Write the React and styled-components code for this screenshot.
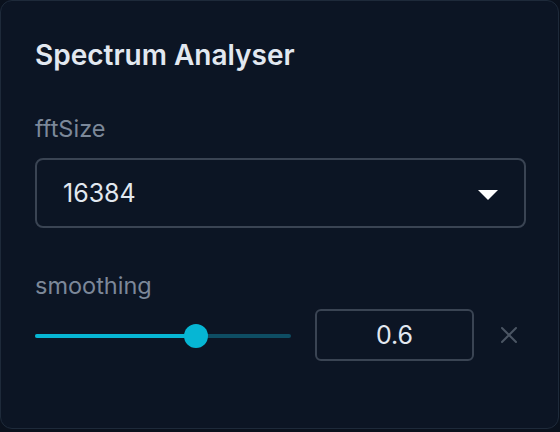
import React, { useState } from "react";
import styled, { createGlobalStyle } from "styled-components";

const GlobalStyle = createGlobalStyle`
  html, body {
    margin: 0;
    padding: 0;
    background: #0a111d;
  }
  body {
    font-family: Inter, "Noto Sans", sans-serif;
  }
`;

const Panel = styled.div`
  box-sizing: border-box;
  width: 559px;
  height: 429px;
  background: #0c1524;
  border: 1px solid #1e2a3a;
  border-radius: 12px;
  padding: 38px 34px 0 34px;
  display: flex;
  flex-direction: column;
`;

const Title = styled.h2`
  margin: 0;
  font-size: 28px;
  font-weight: 600;
  color: #e2e8f0;
  line-height: 32px;
`;

const Label = styled.div`
  font-size: 23.5px;
  color: #7c8899;
  line-height: 28px;
  margin-top: ${p => p.$top}px;
`;

const Select = styled.div`
  box-sizing: border-box;
  margin-top: 15px;
  width: 491px;
  height: 70px;
  border: 2px solid #3a4453;
  border-radius: 8px;
  display: flex;
  align-items: center;
  justify-content: space-between;
  padding: 0 26px 0 26px;
  font-size: 25px;
  color: #e2e8f0;
`;

const Caret = styled.span`
  width: 0;
  height: 0;
  border-left: 10px solid transparent;
  border-right: 10px solid transparent;
  border-top: 10px solid #ffffff;
  margin-top: 4px;
`;

const Row = styled.div`
  display: flex;
  align-items: center;
  margin-top: 9px;
`;

const Track = styled.div`
  position: relative;
  width: 256px;
  height: 4px;
  border-radius: 2px;
  background: #0e4d63;
  margin-top: 2px;
`;

const Fill = styled.div`
  height: 100%;
  border-radius: 2px;
  background: #06b6d4;
`;

const Thumb = styled.div`
  position: absolute;
  top: 50%;
  width: 24px;
  height: 24px;
  border-radius: 50%;
  background: #06b6d4;
  transform: translate(-50%, -50%);
`;

const NumberBox = styled.div`
  box-sizing: border-box;
  margin-left: 24px;
  width: 159px;
  height: 52px;
  border: 2px solid #3a4453;
  border-radius: 6px;
  display: flex;
  align-items: center;
  justify-content: center;
  font-size: 25px;
  color: #e2e8f0;
`;

const Clear = styled.button`
  margin-left: 26px;
  background: none;
  border: none;
  padding: 0;
  display: flex;
  cursor: pointer;
`;

function Slider({ value }) {
  const pct = value * 100;
  return (
    <Track>
      <Fill style={{ width: `${pct}%` }} />
      <Thumb style={{ left: `${pct}%` }} />
    </Track>
  );
}

export default function App() {
  const [smoothing] = useState(0.63);
  return (
    <>
      <GlobalStyle />
      <Panel>
        <Title>Spectrum Analyser</Title>
        <Label $top={44}>fftSize</Label>
        <Select>
          <span>16384</span>
          <Caret />
        </Select>
        <Label $top={44}>smoothing</Label>
        <Row>
          <Slider value={smoothing} />
          <NumberBox>0.6</NumberBox>
          <Clear>
            <svg width="18" height="18" viewBox="0 0 18 18">
              <path d="M2 2 L16 16 M16 2 L2 16" stroke="#4b5563" strokeWidth="2" strokeLinecap="round" />
            </svg>
          </Clear>
        </Row>
      </Panel>
    </>
  );
}
